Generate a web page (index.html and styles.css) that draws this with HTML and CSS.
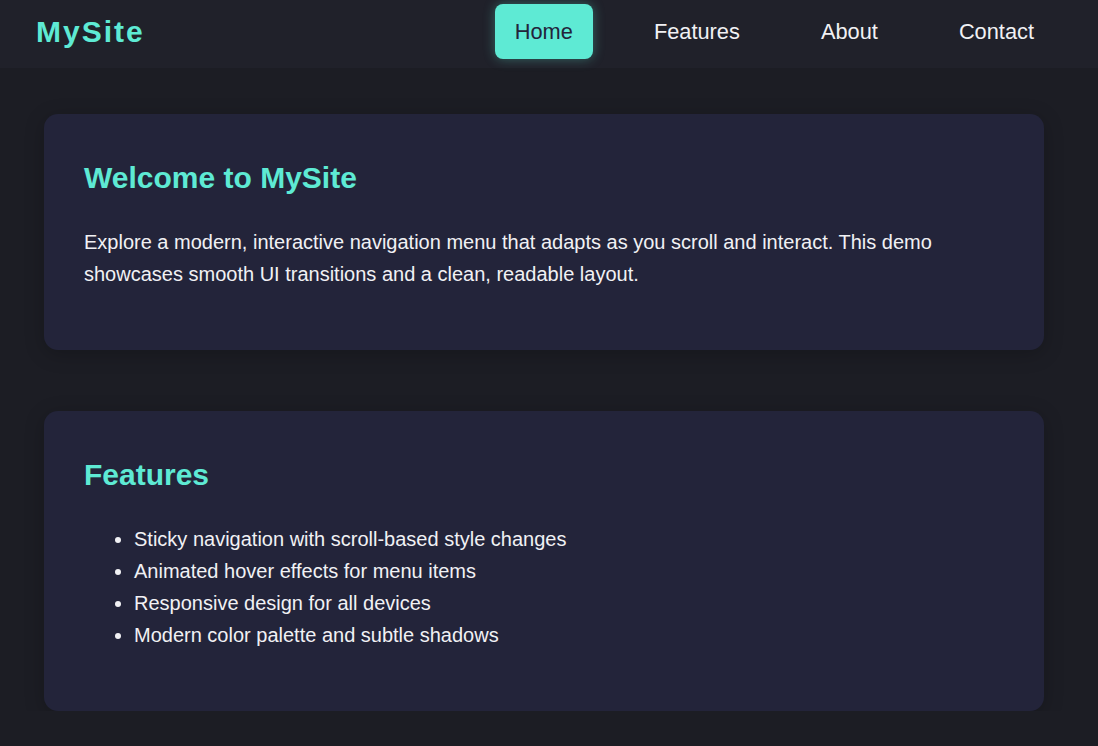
FILE: index.html
```html
<!DOCTYPE html>
<html lang="en">
<head>
<meta charset="utf-8">
<title>MySite</title>
<link rel="stylesheet" href="styles.css">
</head>
<body>
<nav class="navbar">
  <div class="logo">MySite</div>
  <ul class="menu">
    <li><a class="menu-link active" href="#">Home</a></li>
    <li><a class="menu-link" href="#">Features</a></li>
    <li><a class="menu-link" href="#">About</a></li>
    <li><a class="menu-link" href="#">Contact</a></li>
  </ul>
</nav>
<main class="content">
  <section class="card">
    <h2 class="card-title">Welcome to MySite</h2>
    <p class="card-text">Explore a modern, interactive navigation menu that adapts as you scroll and interact. This demo showcases smooth UI transitions and a clean, readable layout.</p>
  </section>
  <section class="card">
    <h2 class="card-title">Features</h2>
    <ul class="feature-list">
      <li>Sticky navigation with scroll-based style changes</li>
      <li>Animated hover effects for menu items</li>
      <li>Responsive design for all devices</li>
      <li>Modern color palette and subtle shadows</li>
    </ul>
  </section>
</main>
</body>
</html>
```
FILE: styles.css
```css
* { box-sizing: border-box; }

html, body {
  margin: 0;
  padding: 0;
}

body {
  background: #1c1d24;
  color: #f1f1f4;
  font-family: "Liberation Sans", Arial, sans-serif;
  font-size: 20px;
  line-height: 1.6;
}

.navbar {
  height: 68px;
  background: #20212a;
  display: flex;
  align-items: center;
  justify-content: space-between;
  padding: 0 44px 5px 36px;
}

.logo {
  color: #5eead4;
  font-weight: 700;
  font-size: 30px;
  letter-spacing: 2px;
  line-height: 1.2;
}

.menu {
  list-style: none;
  margin: 0;
  padding: 0;
  display: flex;
  gap: 41px;
}

.menu-link {
  display: block;
  padding: 15px 20px;
  font-size: 21.8px;
  line-height: 25px;
  color: #f1f1f4;
  text-decoration: none;
  border-radius: 8px;
}

.menu-link.active {
  background: #5eead4;
  color: #23243a;
  box-shadow: 0 0 12px rgba(94, 234, 212, 0.35);
}

.content {
  padding: 46px 0 0 44px;
}

.card {
  width: 1000px;
  background: #23243a;
  border-radius: 14px;
  padding: 40px 40px 60px;
  box-shadow: 0 4px 20px rgba(0, 0, 0, 0.22);
  margin-bottom: 61px;
}

.card:last-child {
  margin-bottom: 0;
}

.card-title {
  margin: 0 0 24px;
  color: #5eead4;
  font-size: 30px;
  font-weight: 700;
  line-height: 1.6;
}

.card-text {
  margin: 0;
}

.feature-list {
  margin: 0;
  padding-left: 50px;
}
```
